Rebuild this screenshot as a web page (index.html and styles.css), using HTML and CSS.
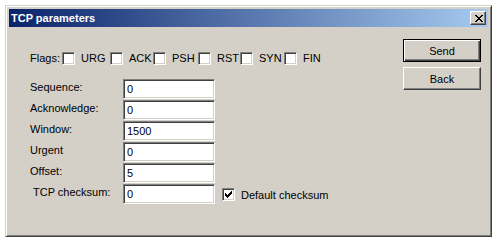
FILE: index.html
```html
<!DOCTYPE html>
<html lang="en">
<head>
    <meta charset="UTF-8">
    <title>TCP parameters</title>
    <link rel="stylesheet" href="styles.css">
</head>
<body>
<div class="dialog">
    <div class="titlebar">
        <span class="title">TCP parameters</span>
        <button class="close">
            <svg width="8" height="7" viewBox="0 0 8 7" shape-rendering="crispEdges">
                <path d="M0 0h2v1h-2zM6 0h2v1h-2zM1 1h2v1h-2zM5 1h2v1h-2zM2 2h4v1h-4zM3 3h2v1h-2zM2 4h4v1h-4zM1 5h2v1h-2zM5 5h2v1h-2zM0 6h2v1h-2zM6 6h2v1h-2z" fill="#000"/>
            </svg>
        </button>
    </div>
    <div class="content">
        <div class="fields">
            <div class="flags">
                <span>Flags:</span>
                <label class="flag"><span class="check"></span>URG</label>
                <label class="flag"><span class="check"></span>ACK</label>
                <label class="flag"><span class="check"></span>PSH</label>
                <label class="flag"><span class="check"></span>RST</label>
                <label class="flag"><span class="check"></span>SYN</label>
                <label class="flag"><span class="check"></span>FIN</label>
            </div>
            <div class="rows">
                <span class="lbl">Sequence:</span>
                <span class="edit">0</span>
                <span class="lbl">Acknowledge:</span>
                <span class="edit">0</span>
                <span class="lbl">Window:</span>
                <span class="edit">1500</span>
                <span class="lbl">Urgent</span>
                <span class="edit">0</span>
                <span class="lbl">Offset:</span>
                <span class="edit">5</span>
                <span class="lbl indent">TCP checksum:</span>
                <div class="edit-line">
                    <span class="edit">0</span>
                    <label class="flag default-sum">
                        <span class="check">
                            <svg width="7" height="7" viewBox="0 0 7 7" shape-rendering="crispEdges">
                                <path d="M6 0h1v3h-1zM5 1h1v3h-1zM4 2h1v3h-1zM3 3h1v3h-1zM2 4h1v3h-1zM1 3h1v3h-1zM0 2h1v3h-1z" fill="#000"/>
                            </svg>
                        </span>Default checksum</label>
                </div>
            </div>
        </div>
        <div class="buttons">
            <button class="btn default">Send</button>
            <button class="btn">Back</button>
        </div>
    </div>
</div>
</body>
</html>
```

FILE: styles.css
```css
* {
    margin: 0;
    padding: 0;
    box-sizing: border-box;
}
html, body {
    background-color: #fff;
}
body {
    padding: 5px;
    font-family: "Liberation Sans", Arial, sans-serif;
    font-size: 11px;
    color: #000;
}
.dialog {
    width: 487px;
    height: 232px;
    background-color: #d4d0c8;
    border: 1px solid;
    border-color: #d4d0c8 #404040 #404040 #d4d0c8;
    box-shadow: inset 1px 1px #fff, inset -1px -1px #808080;
    padding: 3px;
    display: flex;
    flex-direction: column;
}
.titlebar {
    height: 18px;
    background: linear-gradient(to right, #0a246a, #a6caf0);
    display: flex;
    align-items: center;
    padding-left: 2px;
}
.title {
    color: #fff;
    font-weight: bold;
    line-height: 18px;
    flex: 1;
}
.close {
    width: 16px;
    height: 14px;
    margin-right: 2px;
    background-color: #d4d0c8;
    border: 1px solid;
    border-color: #fff #404040 #404040 #fff;
    box-shadow: inset -1px -1px #808080;
    display: flex;
    align-items: center;
    justify-content: center;
    padding-left: 1px;
}
.close svg {
    display: block;
}
.content {
    flex: 1;
    display: flex;
}
.fields {
    flex: 1;
    padding-left: 21px;
    padding-top: 25px;
}
.flags {
    display: grid;
    grid-template-columns: 32px 48px 43px 45px 42px 44px auto;
    align-items: center;
    height: 13px;
    line-height: 13px;
}
.flag {
    display: flex;
    align-items: center;
}
.check {
    width: 13px;
    height: 13px;
    background-color: #fff;
    border: 1px solid;
    border-color: #808080 #fff #fff #808080;
    box-shadow: inset 1px 1px #404040, inset -1px -1px #d4d0c8;
    margin-right: 6px;
    display: flex;
    align-items: center;
    justify-content: center;
}
.check svg {
    display: block;
}
.rows {
    margin-top: 14px;
    display: grid;
    grid-template-columns: 93px auto;
    grid-auto-rows: 20px;
    row-gap: 1px;
}
.lbl {
    line-height: 16px;
}
.lbl.indent {
    padding-left: 3px;
}
.edit {
    width: 92px;
    height: 20px;
    background-color: #fff;
    border: 1px solid;
    border-color: #808080 #fff #fff #808080;
    box-shadow: inset 1px 1px #404040, inset -1px -1px #d4d0c8;
    padding-left: 3px;
    line-height: 18px;
    display: block;
}
.edit-line {
    display: flex;
    align-items: center;
}
.default-sum {
    margin-left: 7px;
    margin-top: 1px;
}
.buttons {
    display: flex;
    flex-direction: column;
    gap: 5px;
    padding-top: 12px;
    margin-right: 7px;
}
.btn {
    width: 78px;
    height: 23px;
    font-family: "Liberation Sans", Arial, sans-serif;
    font-size: 11px;
    color: #000;
    background-color: #d4d0c8;
    border: 1px solid;
    border-color: #fff #404040 #404040 #fff;
    box-shadow: inset -1px -1px #808080, inset 1px 1px #d4d0c8;
}
.btn.default {
    border-color: #000;
    box-shadow: inset 1px 1px #fff, inset -1px -1px #404040, inset -2px -2px #808080;
}
```
